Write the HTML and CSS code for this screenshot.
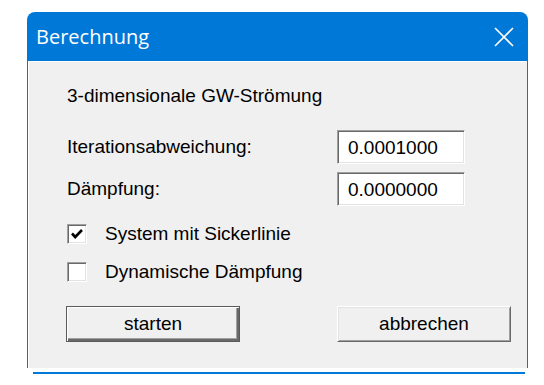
FILE: index.html
```html
<!DOCTYPE html>
<html lang="de">
<head>
    <meta charset="UTF-8">
    <title>Berechnung</title>
    <link rel="stylesheet" href="styles.css">
</head>
<body>
    <div class="page">
        <div class="window">
            <div class="title-bar">
                <span class="title">Berechnung</span>
                <svg class="close" width="20" height="20" viewBox="0 0 20 20">
                    <path d="M1 1 L19 19 M19 1 L1 19" stroke="#fff" stroke-width="1.6" fill="none"/>
                </svg>
            </div>

            <div class="dialog">
                <p class="heading">3-dimensionale GW-Strömung</p>

                <div class="field-row">
                    <label for="iter">Iterationsabweichung:</label>
                    <input type="text" id="iter" value="0.0001000">
                </div>
                <div class="field-row second">
                    <label for="daempf">Dämpfung:</label>
                    <input type="text" id="daempf" value="0.0000000">
                </div>

                <div class="check-row">
                    <span class="box">
                        <svg width="16" height="16" viewBox="0 0 16 16">
                            <path d="M3 7.5 L6.2 11 L13 4" stroke="#000" stroke-width="2.6" fill="none"/>
                        </svg>
                    </span>
                    <span>System mit Sickerlinie</span>
                </div>
                <div class="check-row second">
                    <span class="box"></span>
                    <span>Dynamische Dämpfung</span>
                </div>

                <div class="buttons">
                    <button class="default-btn">starten</button>
                    <button>abbrechen</button>
                </div>
            </div>
            <div class="bottom-line"></div>
        </div>
    </div>
</body>
</html>
```

FILE: styles.css
```css
* {
    margin: 0;
    padding: 0;
    box-sizing: border-box;
}

body {
    background: #fff;
    font-family: "Liberation Sans", Arial, sans-serif;
    font-size: 19px;
    color: #000;
}

.page {
    padding: 12px 0 0 27px;
}

.window {
    width: 501px;
}

.title-bar {
    height: 49px;
    background: #0078d7;
    border-radius: 8px 8px 0 0;
    display: flex;
    align-items: center;
    justify-content: space-between;
    padding: 0 14px 0 9px;
    color: #fff;
    font-family: "Open Sans", sans-serif;
    font-size: 20px;
}

.close {
    display: block;
}

.dialog {
    height: 307px;
    background: #f0f0f0;
    border: 1px solid #0078d7;
    border-top: none;
    border-bottom: none;
    box-shadow: inset 1px 1px 0 #fff;
    padding: 24px 16px 0 39px;
}

.heading {
    line-height: 22px;
    margin-bottom: 23px;
}

.field-row {
    display: flex;
    align-items: center;
    height: 34px;
}

.field-row.second {
    margin-top: 8px;
}

.field-row label {
    width: 270px;
}

.field-row input {
    width: 128px;
    height: 34px;
    font: inherit;
    color: #000;
    background: #fff;
    padding: 2px 0 0 10px;
    border-style: solid;
    border-width: 1px;
    border-color: #a0a0a0 #fff #fff #a0a0a0;
    box-shadow: inset 1px 1px 0 #696969, inset -1px -1px 0 #e3e3e3;
    outline: none;
}

.check-row {
    display: flex;
    align-items: center;
    gap: 18px;
    height: 24px;
    margin-top: 16px;
}

.check-row.second {
    margin-top: 14px;
}

.box {
    width: 20px;
    height: 20px;
    background: #fff;
    border-style: solid;
    border-width: 1px;
    border-color: #a0a0a0 #fff #fff #a0a0a0;
    box-shadow: inset 1px 1px 0 #696969, inset -1px -1px 0 #e3e3e3;
    display: flex;
    align-items: center;
    justify-content: center;
}

.box svg {
    display: block;
}

.buttons {
    display: flex;
    justify-content: space-between;
    margin: 22px 0 0 -1px;
}

button {
    width: 174px;
    height: 36px;
    font: inherit;
    color: #000;
    background: #f0f0f0;
    border-style: solid;
    border-width: 1px;
    border-color: #fff #696969 #696969 #fff;
    box-shadow: inset 1px 1px 0 #e3e3e3, inset -1px -1px 0 #a0a0a0;
}

button.default-btn {
    border-color: #5a5a5a;
    box-shadow: inset 1px 1px 0 #fff, inset -2px -2px 0 #696969, inset -3px -3px 0 #a0a0a0;
}

.bottom-line {
    height: 2px;
    width: 492px;
    margin: 4px 0 0 6px;
    background: #0078d7;
}
```
